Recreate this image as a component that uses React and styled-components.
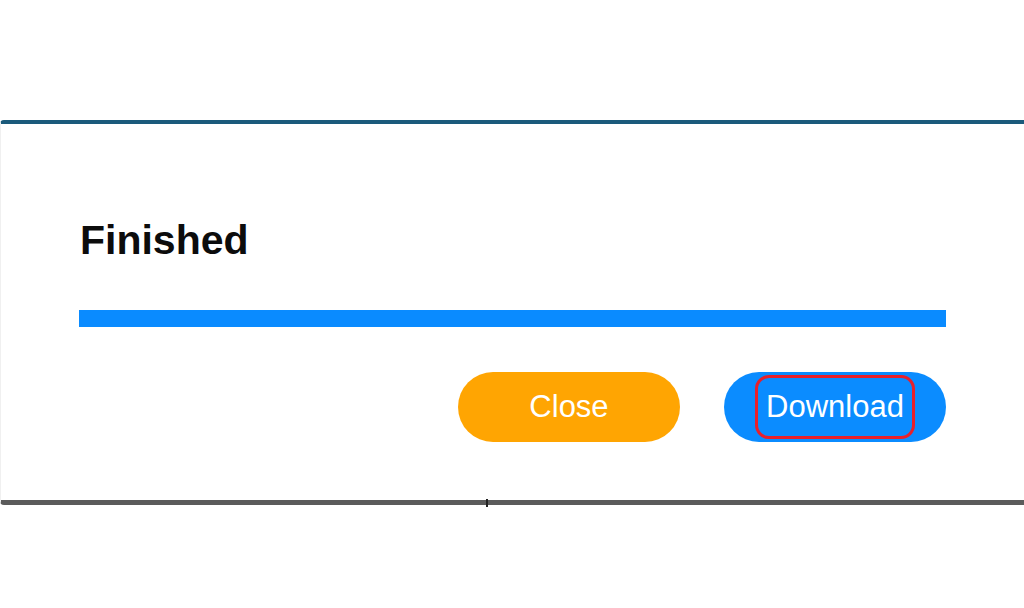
import styled, { createGlobalStyle } from "styled-components";

const GlobalStyle = createGlobalStyle`
  html, body {
    margin: 0;
    padding: 0;
    background: #ffffff;
    overflow: hidden;
  }

  body {
    font-family: "Liberation Sans", Arial, sans-serif;
  }
`;

const Page = styled.div`
  width: 1024px;
  height: 608px;
  padding-top: 120px;
  box-sizing: border-box;
  background: #ffffff;
`;

const Dialog = styled.div`
  position: relative;
  width: 1024px;
  box-sizing: border-box;
  padding: 96px 78px 58px;
  background: #ffffff;
  border-top: 4px solid #1b5a7b;
  border-bottom: 5px solid #5b5b5b;
  border-left: 1px solid #f0f0f0;
  border-radius: 4px 0 0 4px;

  &::after {
    content: "";
    position: absolute;
    left: 485px;
    bottom: -7px;
    width: 2px;
    height: 8px;
    background: #222;
  }
`;

const Title = styled.h2`
  margin: 0;
  padding-left: 1px;
  font-size: 41px;
  line-height: 1;
  font-weight: 700;
  color: #0c0c0c;
`;

const Progress = styled.div`
  margin-top: 49px;
  height: 17px;
  background: #e6e6e6;
`;

const Fill = styled.div`
  height: 100%;
  background: #0a8bff;
`;

const Actions = styled.div`
  display: flex;
  justify-content: flex-end;
  gap: 44px;
  margin-top: 45px;
`;

const Button = styled.button`
  width: 222px;
  height: 70px;
  border: none;
  border-radius: 35px;
  display: flex;
  align-items: center;
  justify-content: center;
  padding: 0;
  background: ${(p) => (p.$variant === "primary" ? "#0b8cff" : "#ffa502")};
  color: #ffffff;
  font-family: "Liberation Sans", Arial, sans-serif;
  font-size: 31px;
  cursor: pointer;
`;

const FocusRing = styled.span`
  display: inline-flex;
  align-items: center;
  height: 64px;
  box-sizing: border-box;
  padding: 0 8px;
  border: 3px solid #e8202c;
  border-radius: 14px;
`;

export default function App() {
  const progress = 100;

  return (
    <Page>
      <GlobalStyle />
      <Dialog>
        <Title>Finished</Title>
        <Progress>
          <Fill style={{ width: `${progress}%` }} />
        </Progress>
        <Actions>
          <Button>Close</Button>
          <Button $variant="primary">
            <FocusRing>Download</FocusRing>
          </Button>
        </Actions>
      </Dialog>
    </Page>
  );
}
